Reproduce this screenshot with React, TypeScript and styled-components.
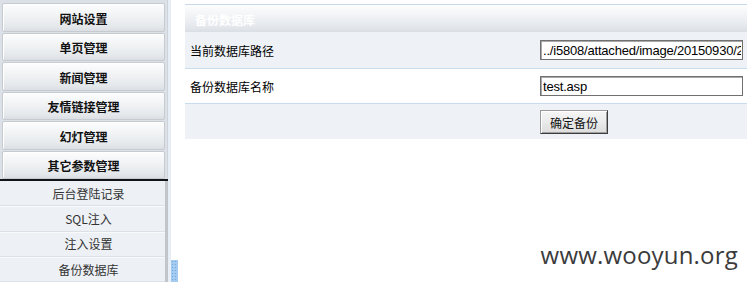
import styled, { createGlobalStyle } from 'styled-components';

const GlobalStyle = createGlobalStyle`
  html, body {
    margin: 0;
    padding: 0;
    background: #fff;
    overflow: hidden;
  }
  body {
    font-family: "Noto Sans CJK SC", "Liberation Sans", sans-serif;
  }
`;

const NAV_ITEMS = ['网站设置', '单页管理', '新闻管理', '友情链接管理', '幻灯管理', '其它参数管理'];
const SUB_ITEMS = ['后台登陆记录', 'SQL注入', '注入设置', '备份数据库'];

export default function App() {
  return (
    <>
      <GlobalStyle />
      <Page>
        <Sidebar>
          <NavList>
            {NAV_ITEMS.map((label) => (
              <NavButton key={label}>{label}</NavButton>
            ))}
          </NavList>
          <Divider />
          <SubList>
            {SUB_ITEMS.map((label) => (
              <SubItem key={label}>{label}</SubItem>
            ))}
          </SubList>
        </Sidebar>

        <Splitter>
          <Handle />
        </Splitter>

        <Main>
          <Panel>
            <PanelHeader>备份数据库</PanelHeader>
            <FormRow height={36}>
              <Label>当前数据库路径</Label>
              <Value>
                <TextInput readOnly value='../i5808/attached/image/20150930/20150930123456.asp' />
              </Value>
            </FormRow>
            <FormRow height={34} white>
              <Label>备份数据库名称</Label>
              <Value>
                <TextInput readOnly value='test.asp' />
              </Value>
            </FormRow>
            <FormRow height={35} last>
              <Label />
              <Value>
                <SubmitButton>确定备份</SubmitButton>
              </Value>
            </FormRow>
          </Panel>
        </Main>

        <Watermark>www.wooyun.org</Watermark>
      </Page>
    </>
  );
}

const Page = styled.div`
  position: relative;
  display: flex;
  flex-flow: row nowrap;
  width: 747px;
  height: 282px;
  overflow: hidden;
`;

const Sidebar = styled.div`
  display: flex;
  flex-flow: column nowrap;
  width: 168px;
  flex-shrink: 0;
  background: #dce1e7;
`;

const NavList = styled.div`
  display: flex;
  flex-flow: column nowrap;
  gap: 1px;
  padding: 3px 2px 0 2px;
  height: 176px;
  border-right: 1px solid #cfd4da;
`;

const NavButton = styled.div`
  display: flex;
  align-items: center;
  justify-content: center;
  height: 28.5px;
  box-sizing: border-box;
  border: 1px solid #c6cbd1;
  border-radius: 2px;
  background: linear-gradient(to bottom, #fdfdfe 0%, #f0f2f4 45%, #e6e9ec 80%, #dbdfe4 100%);
  box-shadow: inset 1px 1px 0 #ffffff;
  font-size: 12px;
  font-weight: bold;
  color: #111;
  padding-top: 2px;
`;

const Divider = styled.div`
  height: 4px;
  box-sizing: border-box;
  border-top: 2px solid #121518;
  background: linear-gradient(to right, #0b2328 0%, #0d7f8c 35%, #12b6c6 60%, #0d7f8c 85%, #0b2328 100%);
`;

const SubList = styled.div`
  flex: 1;
  display: flex;
  flex-flow: column nowrap;
  background: #edf0f4;
  border-right: 3px solid #c2c6cb;
`;

const SubItem = styled.div`
  display: flex;
  align-items: center;
  justify-content: center;
  height: 25.3px;
  flex-shrink: 0;
  box-sizing: border-box;
  padding-left: 12px;
  border-bottom: 1px solid #dde1e6;
  box-shadow: 0 1px 0 #f9fafc;
  font-size: 12px;
  color: #333;
`;

const Splitter = styled.div`
  display: flex;
  flex-flow: column nowrap;
  justify-content: flex-end;
  width: 10px;
  flex-shrink: 0;
  background: linear-gradient(to right, #e8eef6 0 3px, #fff 3px);
`;

const Handle = styled.div`
  width: 7px;
  height: 22px;
  margin-left: 3px;
  background-color: #a3cbef;
  background-image: radial-gradient(circle, #6fa6dc 0.8px, transparent 1px);
  background-size: 3px 3px;
`;

const Main = styled.div`
  flex: 1;
  min-width: 0;
  padding: 4px 0 0 7px;
`;

const Panel = styled.div`
  display: flex;
  flex-flow: column nowrap;
  width: 562px;
`;

const PanelHeader = styled.div`
  height: 28px;
  display: flex;
  align-items: center;
  padding: 2px 0 0 10px;
  box-sizing: border-box;
  border-top: 1px solid #c8d9e9;
  background: linear-gradient(to bottom, #fdfdfe 0%, #f1f3f6 40%, #e2e6eb 85%, #d9dee4 100%);
  color: #fff;
  font-size: 12px;
  font-weight: bold;
`;

const FormRow = styled.div<{ height: number; white?: boolean; last?: boolean }>`
  display: flex;
  flex-flow: row nowrap;
  align-items: center;
  height: ${({ height }) => height}px;
  background: ${({ white }) => (white ? '#ffffff' : '#eef2f6')};
  border-bottom: ${({ last }) => (last ? 'none' : '1px solid #c7ddef')};
`;

const Label = styled.div`
  width: 350px;
  padding-left: 5px;
  box-sizing: border-box;
  font-size: 12px;
  color: #000;
`;

const Value = styled.div`
  flex: 1;
  display: flex;
  align-items: center;
  padding-left: 5px;
`;

const TextInput = styled.input`
  width: 203px;
  height: 20px;
  box-sizing: border-box;
  border: 1px solid #707070;
  box-shadow: inset 1px 1px 0 #a9a9a9;
  padding: 0 1px 0 2px;
  font-family: "Liberation Sans", Arial, sans-serif;
  font-size: 13px;
  letter-spacing: -0.2px;
  color: #000;
  background: #fff;
  outline: none;
`;

const SubmitButton = styled.button`
  width: 68px;
  height: 24px;
  margin-top: 1px;
  box-sizing: border-box;
  border: 1px solid #3c3c3c;
  border-top-color: #9a9a9a;
  border-left-color: #9a9a9a;
  box-shadow: inset 1px 1px 0 #fff, inset -1px -1px 0 #a0a0a0;
  background: linear-gradient(to bottom, #f6f6f6 0%, #ebebeb 50%, #dcdcdc 100%);
  font-family: "Noto Sans CJK SC", sans-serif;
  font-size: 12px;
  color: #111;
  padding: 0;
  cursor: pointer;
`;

const Watermark = styled.div`
  position: absolute;
  right: 9px;
  bottom: 11px;
  font-family: "Open Sans", sans-serif;
  font-size: 24px;
  color: #3b3b3b;
  letter-spacing: 0.2px;
`;
